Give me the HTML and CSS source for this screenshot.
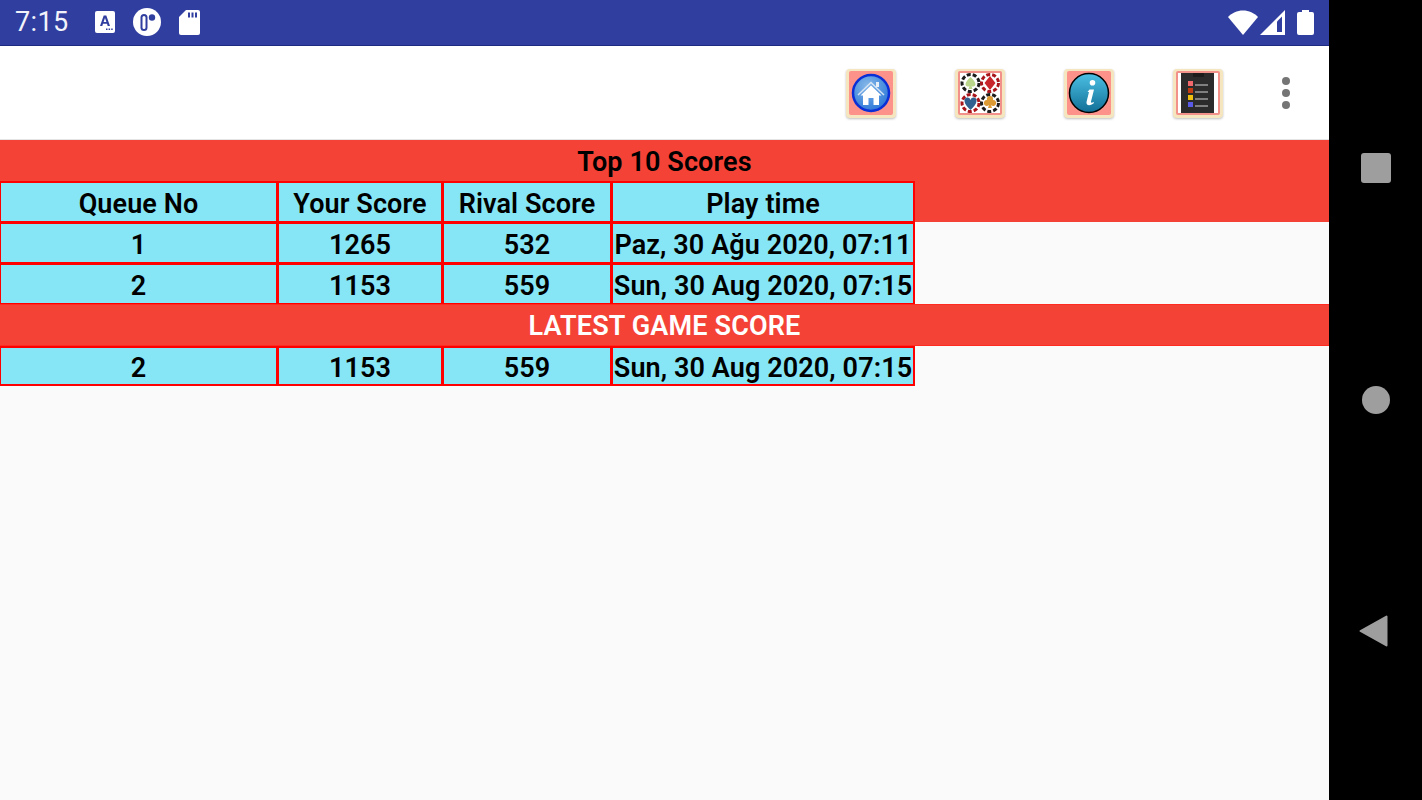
FILE: index.html
```html
<!DOCTYPE html>
<html lang="en">
<head>
<meta charset="utf-8">
<title>Top 10 Scores</title>
<link rel="stylesheet" href="styles.css">
</head>
<body>
<div class="device">
  <div class="screen">
    <header class="status">
      <div class="status-left">
        <span class="clock">7:15</span>
        <svg class="ic-a" viewBox="0 0 20 22"><path fill="#fff" d="M2 0h16a2 2 0 0 1 2 2v18a2 2 0 0 1-2 2H2a2 2 0 0 1-2-2V2a2 2 0 0 1 2-2z"/><path fill="#303f9f" d="M8.700 4.500h2.600L15 15h-2.300l-.7-2.200H8L7.300 15H5zM8.600 11h2.800L10 6.900zM11 17.600h1.500v1.500H11zM13.600 17.600h1.500v1.500h-1.500zM16.200 17.600h1.500v1.500h-1.500z"/></svg>
        <svg class="ic-p" viewBox="0 0 28 28"><circle cx="14" cy="14" r="14" fill="#fff"/><rect x="7.500" y="6" width="7" height="17" rx="3.500" fill="#303f9f"/><rect x="9.500" y="8" width="3" height="13" rx="1.500" fill="#fff"/><circle cx="19" cy="9.500" r="3.200" fill="#303f9f"/></svg>
        <svg class="ic-sd" viewBox="0 0 21 25"><path fill="#fff" d="M7 0h12a2 2 0 0 1 2 2v21a2 2 0 0 1-2 2H2a2 2 0 0 1-2-2V7z"/><path fill="#303f9f" d="M9 2.500h2v5H9zM12.500 2.500h2v5h-2zM16 2.500h2v5h-2z"/></svg>
      </div>
      <div class="status-right">
        <svg class="ic-wifi" viewBox="0 0 30 25"><path fill="#fff" d="M15 25 0 7C4 3 9 .5 15 .5S26 3 30 7z"/></svg>
        <svg class="ic-signal" viewBox="0 0 25 25"><path fill="#fff" d="M25 0v25H0z"/><path fill="#303f9f" d="M17 11.500v10.500h5V6.500z"/></svg>
        <svg class="ic-batt" viewBox="0 0 17 25"><path fill="#fff" d="M5 0h7v2h3a2 2 0 0 1 2 2v19a2 2 0 0 1-2 2H2a2 2 0 0 1-2-2V4a2 2 0 0 1 2-2h3z"/></svg>
      </div>
    </header>

    <nav class="toolbar">
      <button class="tool" aria-label="Home">
        <svg viewBox="0 0 50 50"><defs><radialGradient id="hg" cx=".4" cy=".3" r=".8"><stop offset="0" stop-color="#86b8e8"/><stop offset=".7" stop-color="#3f86dc"/><stop offset="1" stop-color="#2a6fd8"/></radialGradient></defs><rect width="50" height="49" rx="4" fill="#f5e6c0"/><rect x="3" y="2" width="44" height="44" rx="2" fill="#fd928a"/><circle cx="25" cy="24" r="18" fill="url(#hg)" stroke="#0a2fd6" stroke-width="2.500"/><path fill="none" stroke="#d5e4f4" stroke-width="1.500" d="M12 26 25 13.500 38 26"/><path fill="#fff" d="M25 16.500 35.500 26.500h-2.500v9.500h-5.500v-7h-5v7H17v-9.500h-2.500z"/><rect x="30" y="13" width="3" height="5" fill="#e8eef6"/></svg>
      </button>
      <button class="tool" aria-label="Cards">
        <svg viewBox="0 0 50 50"><rect width="50" height="49" rx="4" fill="#f5e6c0"/><rect x="3" y="2" width="44" height="44" rx="2" fill="#f2908a"/><rect x="5" y="4" width="40" height="40" fill="#fff"/>
          <circle cx="15.500" cy="14" r="8.500" fill="#fff" stroke="#1c1c1c" stroke-width="3" stroke-dasharray="4 2"/><path fill="#b9d68a" d="M15.500 8c3 3 5 5 5 7.500a2.500 2.500 0 0 1-4 1.500l1 3h-4l1-3a2.500 2.500 0 0 1-4-1.500c0-2.500 2-4.500 5-7.500z"/>
          <circle cx="35" cy="14" r="8.500" fill="#fff" stroke="#a8161c" stroke-width="3" stroke-dasharray="4 2"/><path fill="#c8242c" d="m35 7 5.500 7-5.500 7-5.500-7z"/>
          <circle cx="15.500" cy="34" r="8.500" fill="#fff" stroke="#a8161c" stroke-width="3" stroke-dasharray="4 2"/><path fill="#2f6090" d="M15.500 41c-3-3-6-6-6-9a3 3 0 0 1 6-1 3 3 0 0 1 6 1c0 3-3 6-6 9z"/>
          <circle cx="35" cy="34" r="8.500" fill="#fff" stroke="#1c1c1c" stroke-width="3" stroke-dasharray="4 2"/><path fill="#dc9a34" d="M35 27a3 3 0 0 1 3 4 3 3 0 1 1-2 5l1 3h-4l1-3a3 3 0 1 1-2-5 3 3 0 0 1 3-4z"/>
        </svg>
      </button>
      <button class="tool" aria-label="Info">
        <svg viewBox="0 0 50 50"><defs><linearGradient id="ig" x1="0" y1="0" x2="0" y2="1"><stop offset="0" stop-color="#4cc0e4"/><stop offset="1" stop-color="#126f96"/></linearGradient></defs><rect width="50" height="49" rx="4" fill="#f5e6c0"/><rect x="3" y="2" width="44" height="44" rx="2" fill="#fd928a"/><circle cx="25" cy="24" r="19.500" fill="url(#ig)" stroke="#000" stroke-width="1.500"/><path fill="#fff" d="M25.500 20.500h4.500l-3 12c-.3 1.500 1 1.500 2.500.5l.5 1c-2.500 2.500-8 3.500-7.500-1l2.500-10h-1.500zM28.500 11a2.800 2.800 0 1 1 0 5.600 2.800 2.800 0 0 1 0-5.600z"/></svg>
      </button>
      <button class="tool" aria-label="Scores">
        <svg viewBox="0 0 50 50"><rect width="50" height="49" rx="4" fill="#f5e6c0"/><rect x="3" y="2" width="44" height="44" rx="2" fill="#f2908a"/><rect x="5" y="4" width="40" height="40" fill="#fff"/><rect x="8" y="4" width="33" height="40" fill="#2b2b2b"/><rect x="20" y="4" width="11" height="4" fill="#1c1c1c"/>
          <rect x="15" y="12" width="5" height="5" fill="#f0686c"/><rect x="15" y="19" width="5" height="5" fill="#c23b12"/><rect x="15" y="26" width="5" height="5" fill="#f0c010"/><rect x="15" y="33" width="5" height="5" fill="#5a5ae8"/>
          <path stroke="#9c9c9c" stroke-width="1.500" d="M22 16h13M22 23h13M22 30h13M22 37h13"/></svg>
      </button>
      <button class="more" aria-label="More options">
        <i class="dot"></i><i class="dot"></i><i class="dot"></i>
      </button>
    </nav>

    <main class="board">
      <div class="red-band">
        <div class="band-title">Top 10 Scores</div>
        <div class="row">
          <div class="cell c1">Queue No</div>
          <div class="cell c2">Your Score</div>
          <div class="cell c3">Rival Score</div>
          <div class="cell c4">Play time</div>
        </div>
      </div>
      <div class="row">
        <div class="cell c1">1</div>
        <div class="cell c2">1265</div>
        <div class="cell c3">532</div>
        <div class="cell c4">Paz, 30 Ağu 2020, 07:11</div>
      </div>
      <div class="row">
        <div class="cell c1">2</div>
        <div class="cell c2">1153</div>
        <div class="cell c3">559</div>
        <div class="cell c4">Sun, 30 Aug 2020, 07:15</div>
      </div>
      <div class="band-title latest">LATEST GAME SCORE</div>
      <div class="row last">
        <div class="cell c1">2</div>
        <div class="cell c2">1153</div>
        <div class="cell c3">559</div>
        <div class="cell c4">Sun, 30 Aug 2020, 07:15</div>
      </div>
    </main>
  </div>

  <aside class="sysnav">
    <span class="nav-square"></span>
    <span class="nav-circle"></span>
    <svg class="nav-back" viewBox="0 0 29 32"><path fill="#9e9e9e" stroke="#9e9e9e" stroke-width="2" stroke-linejoin="round" d="M1.500 16 27.500 1.500v29z"/></svg>
  </aside>
</div>
</body>
</html>
```

FILE: styles.css
```css
* { box-sizing: border-box; }
html, body { margin: 0; padding: 0; height: 100%; overflow: hidden; }
body { background: #000; font-family: Roboto, "Liberation Sans", sans-serif; }

.device { display: flex; width: 1422px; height: 800px; }
.screen { width: 1329px; height: 800px; background: #fafafa; display: flex; flex-direction: column; }

.status {
  height: 46px;
  background: #303f9f;
  border-bottom: 1px solid #1c2a80;
  display: flex;
  justify-content: space-between;
  align-items: center;
  padding: 0 15px 1px 15px;
  color: #fff;
}
.status-left, .status-right { display: flex; align-items: center; }
.clock { font-size: 27px; letter-spacing: .4px; margin-right: 26px; color: #f2f3fa; }
.ic-a { width: 20px; height: 22px; margin-right: 18px; }
.ic-p { width: 28px; height: 28px; margin-right: 18px; }
.ic-sd { width: 21px; height: 25px; }
.ic-wifi { width: 30px; height: 25px; margin-right: 2px; }
.ic-signal { width: 25px; height: 25px; margin-right: 12px; }
.ic-batt { width: 17px; height: 25px; }

.toolbar {
  height: 94px;
  background: #fff;
  display: flex;
  align-items: center;
  justify-content: flex-end;
  padding: 0 33px 0 0;
  border-bottom: 1px solid #e4e4e4;
}
.tool {
  width: 50px;
  height: 50px;
  padding: 0;
  border: 0;
  background: none;
  margin-right: 59px;
  filter: drop-shadow(0 1px 1px rgba(0,0,0,.25));
}
.tool svg { display: block; width: 50px; height: 50px; margin-top: 1px; }
.tool:nth-child(4) { margin-right: 53px; }
.more {
  width: 20px;
  padding: 0;
  border: 0;
  background: none;
  display: flex;
  flex-direction: column;
  align-items: center;
  gap: 4px;
}
.dot { width: 8px; height: 8px; border-radius: 50%; background: #757575; }

.board { display: flex; flex-direction: column; color: #000; font-size: 27px; font-weight: 600; letter-spacing: .1px; }
.red-band { background: #f44336; }
.band-title {
  height: 41px;
  background: #f44336;
  display: flex;
  align-items: center;
  justify-content: center;
  padding-top: 2px;
}
.latest {
  color: #fff;
  height: 42px;
  border-top: 1px solid #ff2a20;
  border-bottom: 1px solid #ff2a20;
  padding-top: 2px;
  letter-spacing: .15px;
}

.row {
  display: flex;
  gap: 3px;
  height: 41px;
  width: 915px;
  padding: 2px 2px 1px 1px;
  background: #ff0000;
}
.last { height: 40px; padding-bottom: 2px; }
.cell {
  background: #87e6f5;
  display: flex;
  align-items: center;
  justify-content: center;
  white-space: nowrap;
  padding-top: 3px;
}
.c1 { width: 275px; }
.c2 { width: 162px; }
.c3 { width: 166px; }
.c4 { width: 300px; }

.sysnav {
  width: 93px;
  height: 800px;
  background: #000;
  display: flex;
  flex-direction: column;
  align-items: center;
  padding-top: 153px;
}
.nav-square { width: 30px; height: 30px; border-radius: 3px; background: #9e9e9e; }
.nav-circle { width: 28px; height: 28px; border-radius: 50%; background: #9e9e9e; margin-top: 203px; }
.nav-back { width: 29px; height: 32px; margin-top: 201px; margin-left: -4px; }
```
